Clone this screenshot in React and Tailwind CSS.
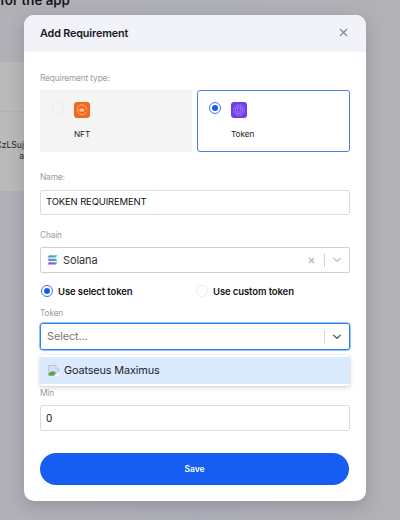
import React from "react";

function Radio({ checked, className = "" }) {
  return (
    <span
      className={`flex size-3 shrink-0 items-center justify-center rounded-full border bg-transparent ${
        checked ? "border-[#3b74ee]" : "border-[#ededed]"
      } ${className}`}
    >
      {checked && <span className="size-1.5 rounded-full bg-[#175cf0]" />}
    </span>
  );
}

function NftIcon() {
  return (
    <svg width="16" height="16" viewBox="0 0 16 16" fill="none">
      <rect width="16" height="16" rx="3" fill="#f4681d" />
      <g stroke="#ffc39b" strokeWidth="0.9">
        <path d="M3.4 6.4A4.8 4.8 0 0 1 12.8 7.4M12.4 9.8A4.8 4.8 0 0 1 3.4 9.2" />
        <path d="M2.8 8h3" />
      </g>
      <path d="M5.8 6.8h4.4v2.6H5.8z" fill="#ffc8a4" />
    </svg>
  );
}

function TokenIcon() {
  return (
    <svg width="16" height="16" viewBox="0 0 16 16" fill="none">
      <rect width="16" height="16" rx="3" fill="#6f3df0" />
      <g stroke="#ab88fa" strokeWidth="0.8">
        <circle cx="8" cy="8" r="5.3" strokeDasharray="3.2 0.9" />
        <circle cx="8" cy="8" r="3.7" />
        <path d="M6.4 6.2h3.2v2.6L8 10.3 6.4 8.8z" />
      </g>
    </svg>
  );
}

function SolanaIcon() {
  return (
    <svg width="11" height="10" viewBox="0 0 12 10" preserveAspectRatio="none">
      <defs>
        <linearGradient id="sol" x1="11" y1="0" x2="2" y2="10" gradientUnits="userSpaceOnUse">
          <stop offset="0" stopColor="#10e5a8" />
          <stop offset="0.5" stopColor="#5a91cf" />
          <stop offset="1" stopColor="#9a38f5" />
        </linearGradient>
      </defs>
      <g fill="url(#sol)">
        <path d="M2.4 0.3H11.5L9.6 2.6H0.5z" />
        <path d="M0.5 3.8H9.6L11.5 6.1H2.4z" />
        <path d="M2.4 7.3H11.5L9.6 9.6H0.5z" />
      </g>
    </svg>
  );
}

function BrokenImage() {
  return (
    <svg width="11" height="11" viewBox="0 0 11 11">
      <path d="M0.5 10.5V0.5H7.5L10.5 3.5V6.5L6 10.5z" fill="#d3e1f8" stroke="#b4bac3" strokeWidth="0.8" />
      <path d="M7.3 0.5V3.7H10.5z" fill="#fff" stroke="#b4bac3" strokeWidth="0.6" />
      <path d="M0.9 10.4V8.6Q3.8 4.4 8 7.7L5.6 10.4z" fill="#52a940" />
      <path d="M5.8 11L11 6.4V11z" fill="#f2f6fd" />
    </svg>
  );
}

function Chevron({ color }) {
  return (
    <svg width="10" height="6" viewBox="0 0 10 6" fill="none">
      <path d="M1.6 1.2L5 4.3L8.4 1.2" stroke={color} strokeWidth="1.4" strokeLinecap="round" />
    </svg>
  );
}

function Label({ children, className = "" }) {
  return (
    <div className={`flex h-3 items-center text-[8.3px] leading-3 tracking-[-0.13px] text-[#9c9c9c] ${className}`}>
      {children}
    </div>
  );
}

function TypeCard({ checked, icon, label, className }) {
  return (
    <div className={`flex h-[62px] ${className}`}>
      <Radio checked={checked} />
      <div className="ml-2.5 flex flex-col items-start">
        {icon}
        <span className="mt-2.5 text-[8.2px] leading-3 tracking-[-0.05px] text-[#222]">{label}</span>
      </div>
    </div>
  );
}

export default function App() {
  return (
    <div className="relative h-[520px] w-[400px] overflow-hidden bg-[#b2b1b7] bg-linear-to-r from-[#b1b0b6] via-[#afafb9] to-[#b2b1b5] font-['Inter',sans-serif] text-[#111]">
      <div className="flex h-[62px] items-start">
        <div className="-mt-2 whitespace-nowrap text-[13.3px] leading-4 font-semibold text-[#17171c]">for the app</div>
      </div>
      <div className="flex h-[129px] w-10 flex-col bg-[#bababa]">
        <div className="h-[50px] border-b border-[#b2b2b2]" />
        <div className="mt-7 w-6 text-right text-[8.6px] leading-[11px] text-[#222]">
          <div className="flex justify-end whitespace-nowrap">CzLSuj</div>
          <div>a</div>
        </div>
      </div>

      <div className="absolute top-[15px] left-6 flex h-[486px] w-[342px] flex-col overflow-hidden rounded-[10px] bg-white shadow-[0_5px_16px_rgba(60,60,80,0.24)]">
        <div className="flex h-[37px] shrink-0 items-center justify-between bg-[#f2f3f8] pr-[18px] pl-4">
          <h1 className="mt-px text-[10.8px] font-semibold tracking-[-0.15px] text-[#17171c]">Add Requirement</h1>
          <svg className="-mt-0.5" width="9" height="9" viewBox="0 0 9 9" fill="none">
            <path d="M1 1L8 8M8 1L1 8" stroke="#85869a" strokeWidth="1.3" />
          </svg>
        </div>

        <div className="flex flex-col px-4 pt-5">
          <Label>Requirement type:</Label>
          <div className="mt-1.5 flex gap-[5px]">
            <TypeCard className="w-[152px] bg-[#f4f4f4] pt-3 pl-3" icon={<NftIcon />} label="NFT" />
            <TypeCard
              checked
              className="w-[153px] rounded-[3px] border border-[#4b80ec] bg-white pt-[11px] pl-[11px]"
              icon={<TokenIcon />}
              label="Token"
            />
          </div>

          <Label className="mt-[19px]">Name:</Label>
          <div className="mt-[7px] flex h-[25px] w-[310px] items-center rounded-[2px] border border-[#dcdcdc] pl-[5px] text-[9.5px] tracking-[-0.15px]">
            TOKEN REQUIREMENT
          </div>

          <Label className="mt-3.5">Chain</Label>
          <div className="mt-1.5 flex h-[26px] w-[310px] items-center rounded-[2px] border border-[#d2d2d2] pl-1.5">
            <SolanaIcon />
            <span className="ml-[5px] text-[11px] tracking-[-0.1px] text-[#333]">Solana</span>
            <svg className="ml-auto" width="7" height="7" viewBox="0 0 7 7" fill="none">
              <path d="M1 1L6 6M6 1L1 6" stroke="#bcbcbc" strokeWidth="1.5" />
            </svg>
            <span className="mr-[7px] ml-[9px] h-[13px] w-px bg-[#d0d0d0]" />
            <span className="mr-[7px]">
              <Chevron color="#c5c5c5" />
            </span>
          </div>

          <div className="mt-3 flex h-3 items-center text-[9.5px] font-semibold tracking-[-0.1px] text-[#151515]">
            <div className="flex w-[156px] items-center gap-[5px] pl-px">
              <Radio checked />
              <span className="relative top-px">Use select token</span>
            </div>
            <div className="flex items-center gap-[5px]">
              <Radio />
              <span className="relative top-px">Use custom token</span>
            </div>
          </div>

          <Label className="mt-2.5">Token</Label>
          <div className="relative mt-1">
            <div className="flex h-[27px] w-[310px] items-center rounded-[3px] border border-[#2f80f5] pl-1.5 shadow-[0_0_0_0.5px_#2f80f5]">
              <span className="text-[10.9px] tracking-[-0.1px] text-[#777]">Select...</span>
              <span className="mr-[7px] ml-auto h-[14px] w-px bg-[#d8d8d8]" />
              <span className="mr-[7px]">
                <Chevron color="#666666" />
              </span>
            </div>
            <div className="absolute top-8 left-0 w-[310px] rounded-[2px] bg-white py-[2px] shadow-[0_0_1px_rgba(0,0,0,0.3),0_2px_5px_rgba(0,0,0,0.15)]">
              <div className="flex h-[27px] items-center bg-[#dceafd] pl-2">
                <BrokenImage />
                <span className="ml-[5px] text-[10.9px] tracking-[-0.15px] text-[#202630]">Goatseus Maximus</span>
              </div>
            </div>
          </div>

          <Label className="mt-[37px]">Min</Label>
          <div className="mt-1.5 flex h-[26px] w-[310px] items-center rounded-[2px] border border-[#dcdcdc] pl-[5px] text-[10px]">
            0
          </div>

          <button className="mt-[22px] h-8 w-[309px] rounded-full bg-[#165df1] pt-px text-[8.5px] font-semibold text-white">
            Save
          </button>
        </div>
      </div>
    </div>
  );
}
